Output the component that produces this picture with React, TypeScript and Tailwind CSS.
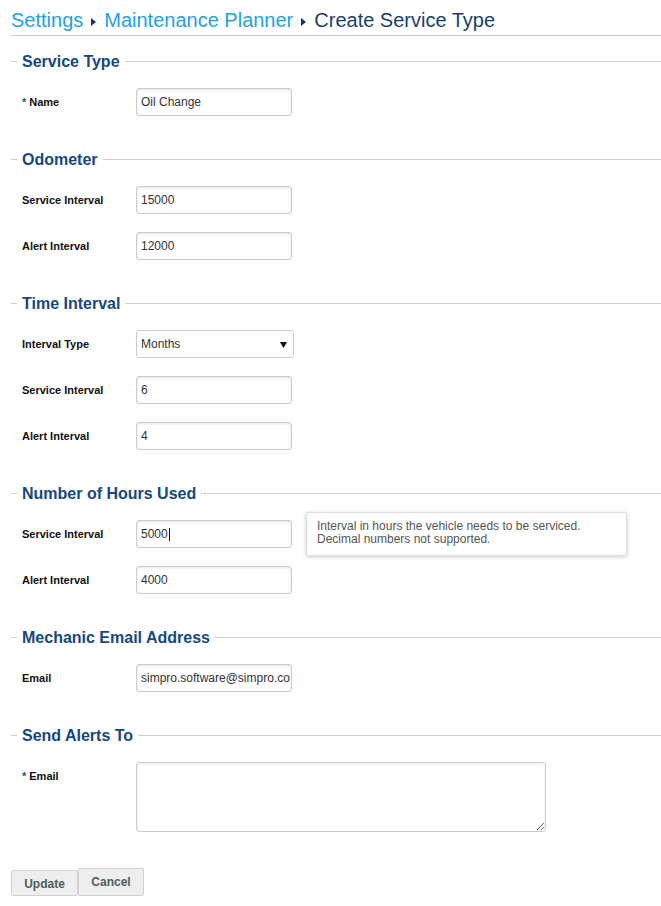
import React from "react";

const inputCls =
  "w-[156px] h-[28px] border border-[#cccccc] rounded-[3px] bg-white pl-[4px] pr-[1px] text-[12px] text-[#333] font-['Liberation_Sans',Arial,sans-serif] shadow-[inset_0_1px_3px_rgba(0,0,0,0.1)] outline-none";

function Heading({ title }: { title: string }) {
  return (
    <div className="flex items-center h-[18px]">
      <div className="w-[6px] h-px bg-[#cfcfcf]" />
      <div className="px-[5px] pt-[2px] text-[16px] leading-[16px] font-bold text-[#16487c] whitespace-nowrap">
        {title}
      </div>
      <div className="flex-1 h-px bg-[#cfcfcf]" />
    </div>
  );
}

function Label({ text, req }: { text: string; req?: boolean }) {
  return (
    <div className="w-[114px] shrink-0 text-[11px] leading-[13px] font-bold text-[#111]">
      {req && <span className="text-[#1c4f80] mr-[3px]">*</span>}
      {text}
    </div>
  );
}

function Row({ label, value, req, children }: { label: string; value?: string; req?: boolean; children?: React.ReactNode }) {
  return (
    <div className="relative flex items-center pl-[11px]">
      <Label text={label} req={req} />
      <input className={inputCls} readOnly value={value ?? ""} />
      {children}
    </div>
  );
}

function Section({ title, first, children }: { title: string; first?: boolean; children: React.ReactNode }) {
  return (
    <div className={first ? "mt-[16px]" : "mt-[34px]"}>
      <Heading title={title} />
      <div className="mt-[18px] flex flex-col gap-[18px]">{children}</div>
    </div>
  );
}

function Tri() {
  return (
    <svg width="5" height="8" viewBox="0 0 5 8" className="mx-[8px] mt-[2px]">
      <polygon points="0,0 5,4 0,8" fill="#17365f" />
    </svg>
  );
}

export default function App() {
  return (
    <div className="min-h-[906px] bg-white font-['Liberation_Sans',Arial,sans-serif]">
      <div className="pl-[11px] pb-[10px]">
        <div className="flex items-center h-[23px] mt-[9px] text-[20px] leading-[23px] whitespace-nowrap">
          <span className="text-[#22a2e2]">Settings</span>
          <Tri />
          <span className="text-[#22a2e2]">Maintenance Planner</span>
          <Tri />
          <span className="text-[#173f6c]">Create Service Type</span>
        </div>
        <div className="mt-[3px] h-px bg-[#cccccc]" />

        <Section title="Service Type" first>
          <Row label="Name" req value="Oil Change" />
        </Section>

        <Section title="Odometer">
          <Row label="Service Interval" value="15000" />
          <Row label="Alert Interval" value="12000" />
        </Section>

        <Section title="Time Interval">
          <div className="flex items-center pl-[11px]">
            <Label text="Interval Type" />
            <div className="w-[158px] h-[28px] border border-[#cccccc] rounded-[3px] bg-white flex items-center justify-between pl-[4px] pr-[6px] text-[12px] text-[#333]">
              <span>Months</span>
              <svg width="7" height="7" viewBox="0 0 7 7">
                <polygon points="0,1 7,1 3.5,7" fill="#111" />
              </svg>
            </div>
          </div>
          <Row label="Service Interval" value="6" />
          <Row label="Alert Interval" value="4" />
        </Section>

        <Section title="Number of Hours Used">
          <Row label="Service Interval" value="5000">
            <span className="absolute left-[158px] top-[8px] w-px h-[13px] bg-[#111]" />
            <div className="absolute left-[295px] top-[-8px] w-[321px] h-[44px] border border-[#dddddd] rounded-[2px] bg-white shadow-[0_1px_4px_rgba(0,0,0,0.2)] pl-[10px] pt-[7px] text-[12px] leading-[13px] text-[#555]">
              <div>Interval in hours the vehicle needs to be serviced.</div>
              <div>Decimal numbers not supported.</div>
            </div>
          </Row>
          <Row label="Alert Interval" value="4000" />
        </Section>

        <Section title="Mechanic Email Address">
          <Row label="Email" value="simpro.software@simpro.com" />
        </Section>

        <Section title="Send Alerts To">
          <div className="flex items-start pl-[11px]">
            <div className="pt-[8px]">
              <Label text="Email" req />
            </div>
            <textarea
              readOnly
              className="w-[410px] h-[70px] border border-[#cccccc] rounded-[3px] bg-white text-[12px] outline-none shadow-[inset_0_1px_3px_rgba(0,0,0,0.08)]"
            />
          </div>
        </Section>

        <div className="mt-[36px] flex items-start">
          <button className="mt-[2px] w-[67px] h-[26px] border border-[#d2d2d2] rounded-[2px] bg-[#eeeeee] text-[12px] font-bold text-[#4d5e5e] pt-[2px]">
            Update
          </button>
          <button className="w-[66px] h-[28px] border border-[#d2d2d2] rounded-[2px] bg-[#eeeeee] text-[12px] font-bold text-[#4d5e5e]">
            Cancel
          </button>
        </div>
      </div>
    </div>
  );
}
